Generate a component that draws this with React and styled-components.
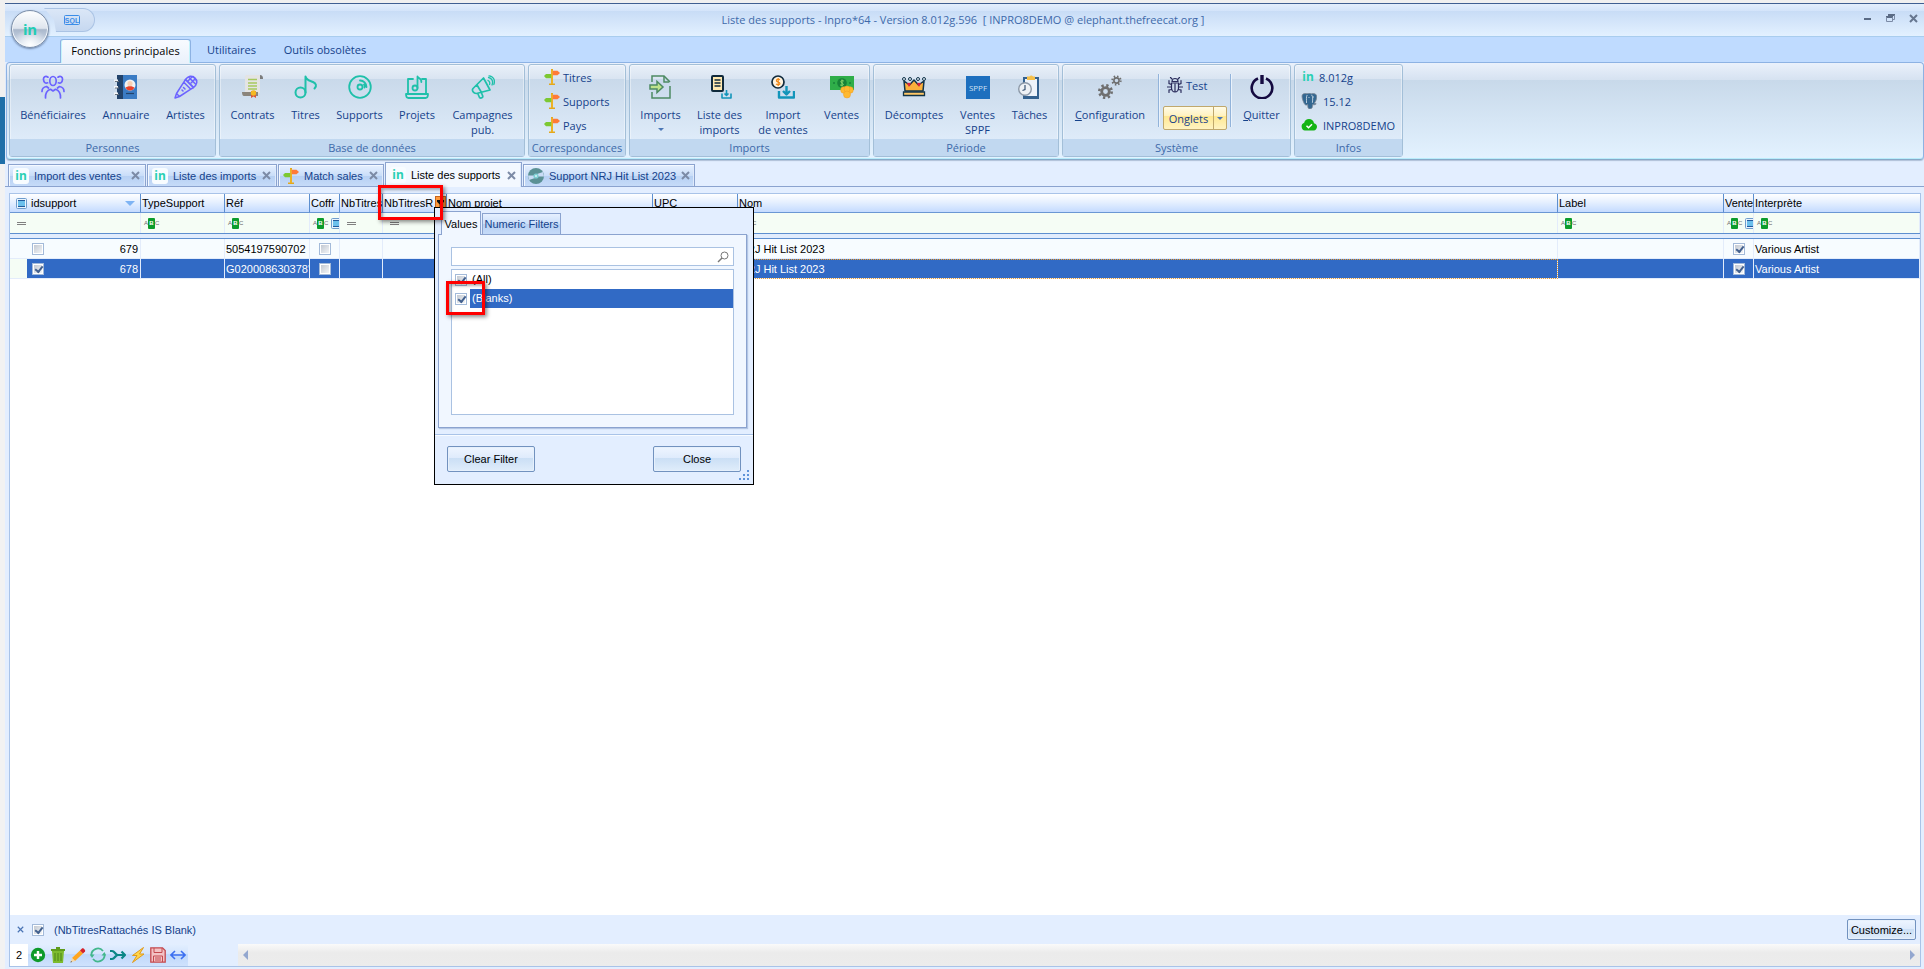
import React from 'react';
import styled, { createGlobalStyle } from 'styled-components';

const GlobalStyle = createGlobalStyle`
  * {
    box-sizing: border-box;
  }
  body {
    margin: 0;
    font-family: "Liberation Sans", Arial, sans-serif;
    font-size: 11px;
    color: #000;
    background: #f0f0f0;
  }
  button, input {
    font: inherit;
    color: inherit;
    margin: 0;
    padding: 0;
  }
  button {
    background: none;
    border: 0;
  }
  svg {
    display: block;
    flex: none;
  }
`;

/* ---------- icons ---------- */

const Svg = ({ s = 24, box = 24, children }) => (
  <svg width={s} height={s} viewBox={`0 0 ${box} ${box}`} fill="none" aria-hidden="true">{children}</svg>
);

const PeopleIcon = () => (
  <Svg>
    <g stroke="#6c63ff" strokeWidth="1.7" strokeLinecap="round" strokeLinejoin="round">
      <ellipse cx="12" cy="6" rx="3.2" ry="4.500" />
      <path d="M7 2.200C4.500 .3 2.200 2 2.500 4.500 2.700 7.500 4.600 8.600 6.600 7.800M17 2.200c2.500-1.900 4.800-.2 4.500 2.300-.2 3-2.100 4.100-4.100 3.300" />
      <path d="M4.500 23c-.3-5.500 1.500-7.500 5-8.700L12 16l2.500-1.700c3.500 1.200 5.300 3.200 5 8.700M1 16.500c0-3.500 1.500-4.500 4.500-5L7.500 13M23 16.500c0-3.500-1.500-4.500-4.500-5L16.500 13" />
    </g>
  </Svg>
);

const BookIcon = () => (
  <Svg>
    <path d="M3 0h20v24H3z" fill="#3b7cc4" />
    <path d="M3 0h6v24H3z" fill="#22436b" />
    <circle cx="16" cy="10" r="5.500" fill="#f2f2f2" />
    <path d="M11.500 12.800a5 5 0 0 0 9 0c-1-2.200-8-2.200-9 0z" fill="#e8402a" />
    <circle cx="16" cy="8.500" r="2.600" fill="#f9d0b4" />
    <path d="M12 18.500h8" stroke="#22436b" strokeWidth="1.200" />
    <path d="M0 5.500h4M0 12h4M0 18.500h4" stroke="#f4f6f8" strokeWidth="2.200" />
    <path d="M1 6.500h4M1 13h4M1 19.500h4" stroke="#6a737d" />
  </Svg>
);

const MicIcon = () => (
  <Svg>
    <g stroke="#6c63ff" strokeWidth="1.500" strokeLinejoin="round" strokeLinecap="round">
      <path d="M11.500 4.500C14 1 18 0 21 3s2 7-1.500 9.500z" />
      <path d="M11.500 4.500 9.800 7.200l7 7 2.700-1.700zM9.800 7.200 2.500 18.500l3 3L16.800 14.200M2.500 18.500 1 23l4.500-1.500" />
      <path d="m15 2.500 6.500 6.500M19 1.500l3.500 4M17 8l4-4M14 6l4-4M9.500 12.500l1.500 1.500M8 15l1 1" />
    </g>
  </Svg>
);

const ContractIcon = () => (
  <Svg>
    <path d="M4 1.500C4 .5 5 0 6 0h13v18H4z" fill="#e4e4e4" />
    <path d="M19 0c2 0 3 1 3 4h-3z" fill="#7c7c7c" />
    <path d="M7 4.500h9M7 8h9M7 11h9M7 14h9" stroke="#a8c95e" strokeWidth="1.300" />
    <path d="M1 17h16v4H3c-1.500 0-2-2-2-4z" fill="#8b857c" />
    <path d="M10 16h5v7l-2.500-1.500L10 23z" fill="#d9573c" />
    <circle cx="12.500" cy="18" r="2.700" fill="#f5b922" />
  </Svg>
);

const NoteIcon = () => (
  <Svg>
    <g stroke="#1fc0aa" strokeWidth="2" strokeLinejoin="round" strokeLinecap="round">
      <circle cx="6.500" cy="17.500" r="5" />
      <path d="M11.500 17.500V1.500c1 4 4.500 4.200 7.500 5.500 3 1.400 4.200 3.600 1.500 6.500" />
    </g>
  </Svg>
);

const DiscIcon = () => (
  <Svg>
    <g stroke="#1fc0aa" strokeWidth="1.800" strokeLinecap="round">
      <circle cx="12" cy="12" r="10.800" />
      <circle cx="12" cy="12" r="2.500" />
      <path d="M12 5.500a6.500 6.500 0 0 1 6.500 6.500M16 9.500a4 4 0 0 1 .5 3" />
    </g>
  </Svg>
);

const ProjectIcon = () => (
  <Svg>
    <g stroke="#1fc0aa" strokeWidth="1.800" strokeLinecap="round" strokeLinejoin="round">
      <path d="M8 4H3v15M17 4h4v15M1 19h22c0 3-.8 4-2.500 4h-17C1.800 23 1 22 1 19z" />
      <circle cx="10" cy="13" r="2.500" />
      <path d="M12.500 13V1.500c.8 2 4.500 2 3.800 5.500" />
    </g>
  </Svg>
);

const MegaphoneIcon = () => (
  <Svg>
    <g stroke="#1fc0aa" strokeWidth="1.700" strokeLinecap="round" strokeLinejoin="round">
      <path d="M2 13.500 12.500 3l6.500 12-13.500 3.500c-3 .2-5-3-3.500-5zM6 10l4.500 7.500" />
      <path d="m7 19 1.500 3.500c1.500 1.300 3.700 0 3.200-1.700L10.500 18" />
      <path d="M17 5.500a3 3 0 0 1 1.500 4M17.500 2.500c3.500.5 5 4 3.500 7.500M18 .8c4.500.2 6.500 4.800 4.800 8.700" strokeWidth="1.300" />
    </g>
  </Svg>
);

const SignIcon = () => (
  <Svg s={16} box={16}>
    <path d="M7 0h2v15H7zM5 14.500h6V16H5z" fill="#e3a81c" />
    <path d="M8 1.800h5.500L16 4l-2.500 2.200H8z" fill="#ff7a38" />
    <path d="M8 5H2L0 7l2 2.200h6z" fill="#7cc832" />
    <path d="M7.300 1h1.400v14H7.300z" fill="#f0b62c" />
  </Svg>
);

const ImportIcon = () => (
  <Svg>
    <g stroke="#4d8a63" strokeWidth="1.500">
      <path d="M3 7V1h12l6 6M21 11v12H3v-6" />
      <path d="M15 1v6h5" />
      <path d="M1 10h7V6.500l6 5.500-6 5.500V14H1z" fill="#bfe38c" />
    </g>
  </Svg>
);

const TrayArrow = ({ big }) => (
  <g stroke="#1295ba" strokeWidth={big ? 2.400 : 1.600} strokeLinejoin="round">
    {big ? <path d="M8 16v6.500h15V16M15.500 11v8M12 16l3.500 3.500L19 16" /> : <path d="M14 18.500v4.500h9v-4.500M18.500 15v5M16.500 18.500l2 2 2-2" />}
  </g>
);

const ListImportIcon = () => (
  <Svg>
    <rect x="4" y="1" width="11" height="15" rx="1" fill="#ffe9b0" stroke="#102a3c" strokeWidth="2" />
    <path d="M6.500 5h6M6.500 8h6M6.500 11h6" stroke="#102a3c" strokeWidth="1.500" />
    <TrayArrow />
  </Svg>
);

const MoneyImportIcon = () => (
  <Svg>
    <circle cx="7" cy="7" r="6" fill="#fff3df" stroke="#102a3c" strokeWidth="1.700" />
    <path d="M9 4.800C6.800 3.500 5 4.500 5.500 6c.4 1.200 3.200.8 3.400 2.300.2 1.600-2.300 2-3.900.8M7.200 3v8" stroke="#f08a1c" strokeWidth="1.200" />
    <TrayArrow big />
  </Svg>
);

const SalesIcon = () => (
  <Svg>
    <path d="M0 1h24v14H0z" fill="#2fae49" />
    <circle cx="12" cy="8" r="4.800" fill="#178238" />
    <path d="M13.800 6C11 4.800 9.800 7 12 8s1.800 3-1.800 2M12 4.500v7" stroke="#8edc6f" />
    <path d="M3 8h2M19 8h2" stroke="#178238" strokeWidth="1.500" />
    <g fill="#ffb930" stroke="#f09a20" strokeWidth=".5">
      <circle cx="14" cy="15" r="3.300" /><circle cx="20" cy="15" r="3.300" />
      <circle cx="17" cy="14" r="3" /><circle cx="17" cy="19.500" r="3.500" />
    </g>
  </Svg>
);

const CrownIcon = () => (
  <Svg>
    <path d="M3 16 2 6l5.500 4L12 5l4.500 5L22 6l-1 10z" fill="#fbb03b" stroke="#12354a" strokeWidth="1.500" strokeLinejoin="round" />
    <path d="M1.500 17h21v3.500h-21z" fill="#ffc766" stroke="#12354a" strokeWidth="1.300" />
    <g fill="#dfe9f5" stroke="#12354a">
      <circle cx="2" cy="4" r="1.500" /><circle cx="8" cy="4" r="1.500" /><circle cx="16" cy="4" r="1.500" /><circle cx="22" cy="4" r="1.500" />
    </g>
    <path d="M5 8.500c1-1 3-1 4 0L7 12zM15 8.500c1-1 3-1 4 0L17 12z" fill="#d8233f" />
  </Svg>
);

const SppfIcon = () => (
  <Svg>
    <path d="M0 1h24v23H0z" fill="#1d6fbe" />
    <text x="12" y="16" textAnchor="middle" fontSize="8" fill="#cfe0f3">SPPF</text>
  </Svg>
);

const TaskIcon = () => (
  <Svg>
    <path d="M5 2h16v22H5z" fill="#34618f" />
    <path d="M7 4h12v17H7z" fill="#eef3fa" />
    <path d="M9 1.500h2.500a2 2 0 0 1 3.500 0h2V5H9z" fill="#f6c04a" />
    <circle cx="7" cy="14" r="6.300" fill="#eef1f5" stroke="#8d99a8" strokeWidth="1.400" />
    <path d="M7 10v4.500l-2.500 1" stroke="#3b5575" strokeWidth="1.200" />
  </Svg>
);

const GearsIcon = () => (
  <Svg>
    <g stroke="#6f6f6f">
      <circle cx="7.500" cy="16.500" r="3.800" strokeWidth="2.800" />
      <circle cx="7.500" cy="16.500" r="6.200" strokeWidth="2.600" strokeDasharray="2.300 2.570" />
      <circle cx="18.500" cy="5.500" r="2.600" strokeWidth="1.600" />
      <circle cx="18.500" cy="5.500" r="4.200" strokeWidth="1.900" strokeDasharray="1.500 1.799" />
    </g>
  </Svg>
);

const BugIcon = () => (
  <Svg s={16} box={16}>
    <g stroke="#2b2d5c" strokeWidth="1.200" strokeLinecap="round">
      <path d="M5 4.500a3 3 0 0 1 6 0zM4.500 6h7v5a3.500 4 0 0 1-7 0zM8 7v7.500" />
      <path d="M5 2 3.500.5M11 2 12.500.5M4.500 7.500 2 6.500V3.500M4.500 10H.5M4.800 12.500 2 13v2.500M11.500 7.500 14 6.500V3.500M11.500 10h4M11.200 12.500 14 13v2.500" />
    </g>
  </Svg>
);

const PowerIcon = () => (
  <Svg>
    <path d="M8 3.500a10.300 10.300 0 1 0 8 0" stroke="#140a40" strokeWidth="2.600" />
    <path d="M12 0v9" stroke="#140a40" strokeWidth="3.400" />
  </Svg>
);

const PostgresIcon = () => (
  <Svg s={16} box={16}>
    <path d="M1 3c0-2 2-3 5-2.200 2-.8 3-.8 4.500 0C14 0 16 1.500 15.800 4c-.2 2.500-1.300 5-2.600 6.300l2 .5c-.8 1-2.300 1.100-3.500.8-.2 2.500-.5 4.400-2.700 4.400-2 0-2.300-1.700-2.300-4.500-1.200 1-2.500.8-3.400-.9C2.200 8.500 1 5.500 1 3z" fill="#336791" stroke="#7b8794" strokeWidth=".8" />
    <path d="M6.200 2c-1.300 2-.5 4.500-.7 8M10.500 1.800c1.500 1.700 1.300 4 .9 8M7.500 4.500h1M12 4h1" stroke="#dbe6f0" strokeWidth=".8" />
  </Svg>
);

const CloudIcon = () => (
  <Svg s={16} box={16}>
    <path d="M4 13.500a4 4 0 0 1-.8-7.700C3.600 3.500 5.500 2 8 2c2.700 0 4.700 1.800 5 4.300 1.800.3 3 1.700 3 3.500s-1.400 3.700-3.200 3.700z" fill="#14b414" />
    <path d="m5.500 8.800 2 2 3.500-3.600" stroke="#fff" strokeWidth="1.500" />
  </Svg>
);

const SqlIcon = () => (
  <svg width="16" height="10" viewBox="0 0 16 10" fill="none" aria-hidden="true">
    <rect x=".5" y=".5" width="15" height="9" rx="1" stroke="#3b8de8" />
    <text x="8" y="7.500" textAnchor="middle" fontSize="7" fontWeight="bold" fill="#3b8de8">SQL</text>
  </svg>
);

const VinylIcon = () => (
  <Svg s={16} box={16}>
    <circle cx="8" cy="8" r="8" fill="#5b9195" />
    <path d="M0 7.500 6 7.500 7 10 1 12z" fill="#c9dcf6" />
    <path d="M16 8.500 10 8.500 9 6 15 4z" fill="#c9dcf6" />
    <circle cx="8" cy="8" r="2.600" fill="#7fcfd4" />
    <circle cx="8" cy="8" r="1" fill="#d9f3f5" />
  </Svg>
);

const CloseIcon = ({ s = 9, color = '#7c8ba6', w = 2 }) => (
  <Svg s={s} box={9}><path d="m1 1 7 7M8 1 1 8" stroke={color} strokeWidth={w} /></Svg>
);

const AddIcon = () => (
  <Svg s={16} box={16}><circle cx="8" cy="8" r="7.200" fill="#0e9a2a" /><path d="M8 4v8M4 8h8" stroke="#fff" strokeWidth="2.400" /></Svg>
);
const TrashIcon = () => (
  <Svg s={16} box={16}>
    <path d="M2 4h12l-1 12H3z" fill="#7dbb2e" /><path d="M1 3h14M6 1h4" stroke="#5f9c1c" strokeWidth="1.800" />
    <path d="M5 6v8M8 6v8M11 6v8" stroke="#4d8416" />
  </Svg>
);
const PencilIcon = () => (
  <Svg s={16} box={16}>
    <path d="M2 11 10 3.500 13 6.500 5 14z" fill="#ffa51f" /><path d="m10 3.500 2-2c1-1 4 1.500 3 3l-2 2z" fill="#d6232b" />
    <path d="m2 11 3 3-4.500 1.500z" fill="#f5d7a4" /><path d="m1 14-.5 1.500L2 15z" fill="#333" />
  </Svg>
);
const RefreshIcon = () => (
  <Svg s={16} box={16}>
    <path d="M1.500 9A6.500 6.500 0 0 1 13 4M14.500 7A6.500 6.500 0 0 1 3 12" stroke="#42b78c" strokeWidth="1.800" />
    <path d="M0 7.500h4.500L2 11zM11.500 8.500H16L14.500 5z" fill="#42b78c" />
  </Svg>
);
const MergeIcon = () => (
  <Svg s={16} box={16}>
    <path d="M0 4h2c3 0 3 4 6 4h7M0 12h2c3 0 3-4 6-4M11.500 4.500 15 8l-3.500 3.500" stroke="#0a8686" strokeWidth="2.200" />
  </Svg>
);
const BoltIcon = () => (
  <Svg s={16} box={16}><path d="M13.500.5 2.500 8.500h4.500L2.500 15.500 14 7H9.500z" fill="#ffd54a" stroke="#e09a1c" /></Svg>
);
const SaveIcon = () => (
  <Svg s={16} box={16}>
    <path d="M.8.800h11.700l2.700 2.700v11.700H.8z" fill="#f3c3c5" stroke="#c4494f" strokeWidth="1.300" />
    <path d="M4 1v4.500h8V1M3.500 15V9h9v6M5 11h6M5 13h6" stroke="#c4494f" />
  </Svg>
);
const WidthIcon = () => (
  <Svg s={16} box={16}><path d="M1 8h14M5 4 1 8l4 4M11 4l4 4-4 4" stroke="#3c6ff0" strokeWidth="1.600" /></Svg>
);

const RowMenuIcon = ({ s = 11 }) => (
  <Svg s={s} box={11}>
    <rect x=".5" y=".5" width="10" height="10" rx="1" fill="#eaf4fd" stroke="#6e9ccc" />
    <path d="M2 3h7v5H2z" fill="#6cc0ec" /><path d="M2 2.500h7M2 8.500h7" stroke="#235a9c" />
  </Svg>
);

const Abc = styled.span`
  display: inline-flex;
  align-items: center;
  flex: none;
  font-size: 6px;
  line-height: 11px;
  color: #6b6b6b;
  b {
    width: 7px;
    background: #0c9c2c;
    color: #fff;
    text-align: center;
    border-radius: 1px;
  }
`;
const AbcIcon = () => <Abc>A<b>B</b>C</Abc>;

const InLogo = styled.span`
  display: grid;
  place-items: center;
  flex: none;
  width: ${({ $w }) => $w || 16}px;
  height: 16px;
  border-radius: 3px;
  background: ${({ $plain }) => ($plain ? 'none' : '#f8fcff')};
  color: #2ad0b4;
  font: bold 12px/14px "Noto Sans", sans-serif;
`;

/* ---------- data ---------- */

const personnes = [
  { icon: <PeopleIcon />, text: 'Bénéficiaires', w: 82 },
  { icon: <BookIcon />, text: 'Annuaire', w: 64 },
  { icon: <MicIcon />, text: 'Artistes', w: 55 },
];
const donnees = [
  { icon: <ContractIcon />, text: 'Contrats', w: 61 },
  { icon: <NoteIcon />, text: 'Titres', w: 45 },
  { icon: <DiscIcon />, text: 'Supports', w: 63 },
  { icon: <ProjectIcon />, text: 'Projets', w: 52 },
  { icon: <MegaphoneIcon />, text: <>Campagnes<br />pub.</>, w: 79 },
];
const imports = [
  { icon: <ImportIcon />, text: 'Imports', w: 57, menu: true },
  { icon: <ListImportIcon />, text: <>Liste des<br />imports</>, w: 61 },
  { icon: <MoneyImportIcon />, text: <>Import<br />de ventes</>, w: 66 },
  { icon: <SalesIcon />, text: 'Ventes', w: 51 },
];
const periode = [
  { icon: <CrownIcon />, text: 'Décomptes', w: 76 },
  { icon: <SppfIcon />, text: <>Ventes<br />SPPF</>, w: 51 },
  { icon: <TaskIcon />, text: 'Tâches', w: 53 },
];

const docTabs = [
  { icon: <InLogo>in</InLogo>, text: 'Import des ventes', w: 138 },
  { icon: <InLogo>in</InLogo>, text: 'Liste des imports', w: 130 },
  { icon: <SignIcon />, text: 'Match sales', w: 106 },
  { icon: <InLogo>in</InLogo>, text: 'Liste des supports', w: 137, active: true },
  { icon: <VinylIcon />, text: 'Support NRJ Hit List 2023', w: 172 },
];

const columns = [
  { title: 'idsupport', w: 131, filter: 'eq', first: true },
  { title: 'TypeSupport', w: 84, filter: 'abc' },
  { title: 'Réf', w: 85, filter: 'abc' },
  { title: 'Coffr', w: 30, filter: 'abc+' },
  { title: 'NbTitres', w: 43, filter: 'eq' },
  { title: 'NbTitresR', w: 64, filter: 'eq', filtered: true },
  { title: 'Nom projet', w: 206, filter: 'abc' },
  { title: 'UPC', w: 85, filter: 'abc' },
  { title: 'Nom', filter: 'abc' },
  { title: 'Label', w: 166, filter: 'abc' },
  { title: 'Vente', w: 30, filter: 'abc+' },
  { title: 'Interprète', w: 166, filter: 'abc' },
];

const rows = [
  { id: 679, ref: '5054197590702', nom: 'NRJ Hit List 2023', artist: 'Various Artist' },
  { id: 678, ref: "G020008630378'", nom: 'NRJ Hit List 2023', artist: 'Various Artist', selected: true },
];

const tools = [
  ['Ajouter', <AddIcon />], ['Supprimer', <TrashIcon />], ['Modifier', <PencilIcon />], ['Rafraîchir', <RefreshIcon />],
  ['Fusionner', <MergeIcon />], ['Actions', <BoltIcon />], ['Enregistrer', <SaveIcon />], ['Ajuster', <WidthIcon />],
];

/* ---------- ribbon ---------- */

const BigButton = ({ icon, text, w, menu }) => (
  <Big $w={w}>
    {icon}
    <span>{text}</span>
    {menu && <Caret />}
  </Big>
);

const ButtonGroup = ({ title, items }) => (
  <Group>
    <GroupBody>{items.map((item, i) => <BigButton key={i} {...item} />)}</GroupBody>
    <GroupTitle>{title}</GroupTitle>
  </Group>
);

const Ribbon = () => (
  <RibbonPanel>
    <ButtonGroup title="Personnes" items={personnes} />
    <ButtonGroup title="Base de données" items={donnees} />
    <Group>
      <SmallList $pad={15}>
        <SmallButton><SignIcon />Titres</SmallButton>
        <SmallButton><SignIcon />Supports</SmallButton>
        <SmallButton><SignIcon />Pays</SmallButton>
      </SmallList>
      <GroupTitle $w={96}>Correspondances</GroupTitle>
    </Group>
    <ButtonGroup title="Imports" items={imports} />
    <ButtonGroup title="Période" items={periode} />
    <Group>
      <GroupBody>
        <BigButton icon={<GearsIcon />} text={<><u>C</u>onfiguration</>} w={90} />
        <Divider />
        <SystemColumn>
          <SmallButton><BugIcon />Test</SmallButton>
          <SplitButton>
            <button>Onglets</button>
            <button aria-label="Choisir"><Caret /></button>
          </SplitButton>
        </SystemColumn>
        <Divider />
        <BigButton icon={<PowerIcon />} text={<><u>Q</u>uitter</>} w={53} />
      </GroupBody>
      <GroupTitle>Système</GroupTitle>
    </Group>
    <Group>
      <SmallList $pad={6}>
        <Info><InLogo $plain $w={14}>in</InLogo>8.012g</Info>
        <Info $gap={6}><PostgresIcon />15.12</Info>
        <Info $gap={6}><CloudIcon />INPRO8DEMO</Info>
      </SmallList>
      <GroupTitle $w={107}>Infos</GroupTitle>
    </Group>
  </RibbonPanel>
);

/* ---------- grid ---------- */

const FilterCell = ({ kind }) => (
  <FilterInner>
    {kind === 'eq' ? <EqualSign /> : <AbcIcon />}
    {kind === 'abc+' && <RowMenuIcon />}
  </FilterInner>
);

const DataGrid = () => (
  <Table>
    <colgroup>
      {columns.map((c) => <Col key={c.title} $w={c.w} />)}
    </colgroup>
    <thead>
      <tr>
        {columns.map((c) => (
          <Th key={c.title} scope="col">
            <HeadInner $first={c.first} $tight={c.filtered}>
              {c.first && <RowMenuIcon />}
              <span>{c.title}</span>
              {c.first && <SortMark />}
              {c.filtered && (
                <FilterMark aria-label="Filtrer">
                  <svg width="7" height="7" viewBox="0 0 8 8"><path d="M0 0h8v2L5 5v3H3V5L0 2z" fill="#111" /></svg>
                </FilterMark>
              )}
            </HeadInner>
          </Th>
        ))}
      </tr>
      <tr>
        {columns.map((c) => <FilterTd key={c.title}><FilterCell kind={c.filter} /></FilterTd>)}
      </tr>
      <tr><Band colSpan={columns.length} /></tr>
    </thead>
    <tbody>
      {rows.map((r) => (
        <Row key={r.id} $selected={r.selected}>
          <Td>
            <IdCell>
              <Check type="checkbox" defaultChecked={r.selected} aria-label={`Ligne ${r.id}`} />
              {r.id}
            </IdCell>
          </Td>
          <Td />
          <Td>{r.ref}</Td>
          <Td $center><Check type="checkbox" aria-label="Coffret" /></Td>
          <Td />
          <Td />
          <Td />
          <Td />
          <Td $focus={r.selected}>{r.nom}</Td>
          <Td />
          <Td $center><Check type="checkbox" defaultChecked aria-label="Ventes" /></Td>
          <Td>{r.artist}</Td>
        </Row>
      ))}
    </tbody>
  </Table>
);

const FilterPopup = () => (
  <Popup role="dialog" aria-label="Filtre">
    <PopupTabs>
      <PopupTab $active>Values</PopupTab>
      <PopupTab>Numeric Filters</PopupTab>
    </PopupTabs>
    <PopupPanel>
      <Search>
        <input type="text" aria-label="Rechercher" />
        <svg width="12" height="12" viewBox="0 0 12 12" fill="none">
          <circle cx="7.500" cy="4.500" r="3.500" stroke="#777" /><path d="M5 7 1 11" stroke="#777" strokeWidth="1.500" />
        </svg>
      </Search>
      <Values>
        <Value><Check type="checkbox" defaultChecked /><span>(All)</span></Value>
        <Value $selected><Check type="checkbox" defaultChecked /><span>(Blanks)</span></Value>
      </Values>
    </PopupPanel>
    <PopupFooter>
      <PushButton>Clear Filter</PushButton>
      <PushButton>Close</PushButton>
    </PopupFooter>
    <Grip>
      <svg width="12" height="12" viewBox="0 0 12 12" fill="#5f93d8">
        <path d="M8 0h2v2H8zM4 4h2v2H4zM8 4h2v2H8zM0 8h2v2H0zM4 8h2v2H4zM8 8h2v2H8z" />
      </svg>
    </Grip>
    <Marker $x={11} $y={73} $w={39} $h={34} />
  </Popup>
);

const App = () => (
  <Page>
    <GlobalStyle />
    <SideStrip />
    <Window>
      <TitleBar>
        <QuickAccess><button aria-label="SQL"><SqlIcon /></button></QuickAccess>
        <Title>Liste des supports - Inpro*64 - Version 8.012g.596&nbsp; [ INPRO8DEMO @ elephant.thefreecat.org ]</Title>
        <WindowButtons>
          <button aria-label="Réduire">
            <svg width="9" height="9" viewBox="0 0 9 9"><path d="M1 4h7v2H1z" fill="#5a6b85" /></svg>
          </button>
          <button aria-label="Restaurer">
            <svg width="9" height="9" viewBox="0 0 9 9" fill="none"><path d="M2 1h7M0 3h7" stroke="#5a6b85" strokeWidth="2" /><path d="M.5 3v4.500h6V3M8.500 1v4.500h-2" stroke="#7c8ba6" /></svg>
          </button>
          <button aria-label="Fermer"><CloseIcon color="#66768f" /></button>
        </WindowButtons>
        <AppButton aria-label="Menu">in</AppButton>
      </TitleBar>

      <RibbonTabs>
        <RibbonTab $w={131} $active>Fonctions principales</RibbonTab>
        <RibbonTab $w={81}>Utilitaires</RibbonTab>
        <RibbonTab $w={106}>Outils obsolètes</RibbonTab>
      </RibbonTabs>
      <Ribbon />

      <DocTabs>
        {docTabs.map((t) => (
          <DocTab key={t.text} $w={t.w} $active={t.active}>
            {t.icon}
            <button>{t.text}</button>
            <button aria-label="Fermer l'onglet"><CloseIcon /></button>
          </DocTab>
        ))}
      </DocTabs>

      <GridPanel>
        <DataGrid />
        <Spacer />
        <FilterBar>
          <button aria-label="Effacer le filtre"><CloseIcon s={7} color="#4a74b4" w={1.5} /></button>
          <label>
            <Check type="checkbox" defaultChecked />
            (NbTitresRattachés IS Blank)
          </label>
          <PushButton $small>Customize...</PushButton>
        </FilterBar>
        <StatusBar>
          <Count>2</Count>
          <Toolbar>
            {tools.map(([name, icon]) => <button key={name} aria-label={name}>{icon}</button>)}
          </Toolbar>
          <ScrollTrack>
            <Arrow $left />
            <Arrow />
          </ScrollTrack>
        </StatusBar>
        <FilterPopup />
        <Marker $x={368} $y={-9} $w={65} $h={35} />
      </GridPanel>
    </Window>
  </Page>
);

/* ---------- styles ---------- */

const Page = styled.div`
  display: flex;
  min-height: 100vh;
  padding-top: 3px;
`;

const SideStrip = styled.div`
  width: 5px;
  background: linear-gradient(#f0f0f0 94px, #1f6fa8 94px, #1f6fa8 161px, #f2f2f2 161px);
`;

const Window = styled.div`
  flex: 1;
  min-width: 0;
  display: flex;
  flex-direction: column;
  background: #e3eeff;
  border-top: 1px solid #3f5f92;
`;

const TitleBar = styled.header`
  position: relative;
  display: flex;
  align-items: center;
  height: 33px;
  padding: 0 6px 0 35px;
  border-bottom: 1px solid #a9cdee;
  background: linear-gradient(#e3eefc, #d3e4fa 7px, #c8dcf6 7px, #e3f1ff);
`;

const QuickAccess = styled.div`
  display: flex;
  align-items: center;
  justify-content: flex-end;
  width: 55px;
  height: 24px;
  padding-right: 14px;
  border: 1px solid #aac3e4;
  border-radius: 0 12px 12px 0;
  border-left: 0;
  background: linear-gradient(#dbe7f7, #c6d8f0);
  clip-path: polygon(4px 0, 100% 0, 100% 100%, 16px 100%, 14px 50%);
`;

const AppButton = styled.button`
  position: absolute;
  left: 6px;
  top: 6px;
  width: 38px;
  height: 38px;
  border-radius: 50%;
  border: 1px solid #7c8ea8;
  background: radial-gradient(circle at 50% 95%, #fff, transparent 45%), linear-gradient(#fdfeff, #dfe5ee 48%, #aab8cc 52%, #dce6f2);
  box-shadow: inset 0 0 0 1px #f4f8fc, 0 1px 2px #6e85a8;
  color: #22cdb4;
  font: bold 15px/18px "Noto Sans", sans-serif;
`;

const Title = styled.h1`
  flex: 1;
  margin: 0;
  padding-right: 32px;
  text-align: center;
  font: normal 11px/16px "Open Sans", sans-serif;
  color: #3e6aaa;
`;

const WindowButtons = styled.div`
  display: flex;
  gap: 14px;
  margin-bottom: 3px;
`;

const RibbonTabs = styled.nav`
  display: flex;
  align-items: flex-end;
  height: 25px;
  padding-left: 55px;
  background: #bfdbff;
`;

const RibbonTab = styled.button`
  width: ${({ $w }) => $w}px;
  height: 23px;
  padding-bottom: 2px;
  font: 11px/20px "Open Sans", sans-serif;
  color: ${({ $active }) => ($active ? '#000' : '#15428b')};
  ${({ $active }) => $active && `
    position: relative;
    height: 24px;
    margin-bottom: -1px;
    border: 1px solid #8db2e3;
    border-bottom: 0;
    border-radius: 3px 3px 0 0;
    background: linear-gradient(#f8fbff, #eaf1fb);
    box-shadow: inset 1px 0 #c4f3fb, inset -1px 0 #c4f3fb;
    z-index: 1;
  `}
`;

const RibbonPanel = styled.section`
  display: flex;
  gap: 3px;
  height: 98px;
  margin: 0 0 0 1px;
  padding: 1px 2px;
  border: 1px solid #8db2e3;
  border-bottom-color: #86a9c8;
  border-radius: 4px;
  background: linear-gradient(#eaf1fb, #d6e2f1 17px, #c8d9ea 17px, #e3f2ff);
  box-shadow: inset 0 -1px #b8ecfb, 0 1px 1px #aebfd8;
  font-family: "Open Sans", sans-serif;
  color: #15428b;
`;

const Group = styled.div`
  display: flex;
  flex-direction: column;
  height: 93px;
  border: 1px solid #a3bfd8;
  border-radius: 3px;
  box-shadow: inset 0 0 0 1px rgba(255, 255, 255, 0.4);
  background: linear-gradient(#e9f0f9, #d9e4f1 14px, #c9d9ea 14px, #deebf9 74px);
`;

const GroupBody = styled.div`
  flex: 1;
  display: flex;
  padding: 0 2px;
`;

const GroupTitle = styled.div`
  width: ${({ $w }) => ($w ? `${$w}px` : 'auto')};
  height: 17px;
  line-height: 17px;
  text-align: center;
  background: #c1d8f0;
  color: #3e6aaa;
`;

const Big = styled.button`
  display: flex;
  flex-direction: column;
  align-items: center;
  width: ${({ $w }) => $w}px;
  padding-top: 10px;
  line-height: 15px;
  white-space: nowrap;
  > span {
    margin-top: 8px;
  }
`;

const Caret = styled.i`
  width: 0;
  height: 0;
  border: 3px solid transparent;
  border-top-color: #4c77b6;
  border-bottom: 0;
  ${Big} & {
    margin-top: 6px;
  }
`;

const SmallList = styled.div`
  flex: 1;
  display: flex;
  flex-direction: column;
  padding-left: ${({ $pad }) => $pad}px;
`;

const SmallButton = styled.button`
  display: flex;
  align-items: center;
  gap: 3px;
  height: 24px;
  line-height: 15px;
`;

const Info = styled.div`
  display: flex;
  align-items: center;
  gap: ${({ $gap }) => $gap || 4}px;
  height: 24px;
`;

const Divider = styled.div`
  width: 1px;
  height: 53px;
  margin: 9px 4px 0 3px;
  background: #92b3da;
  box-shadow: 1px 0 #eaf2fb;
`;

const SystemColumn = styled.div`
  display: flex;
  flex-direction: column;
  gap: 9px;
  width: 64px;
  padding-top: 8px;
  ${SmallButton} {
    padding-left: 4px;
  }
`;

const SplitButton = styled.div`
  display: flex;
  height: 24px;
  border: 1px solid #c0a86c;
  border-radius: 2px;
  background: linear-gradient(#fffbe6, #fff2c0 40%, #ffe890 42%, #fff3c2);
  button:first-child {
    flex: 1;
  }
  button:last-child {
    display: grid;
    place-items: center;
    width: 13px;
    border-left: 1px solid #c0a86c;
  }
`;

const DocTabs = styled.nav`
  display: flex;
  align-items: flex-end;
  gap: 1px;
  height: 27px;
  padding-left: 3px;
  border-bottom: 1px solid #8ba3cf;
`;

const DocTab = styled.div`
  display: flex;
  align-items: center;
  gap: 5px;
  width: ${({ $w }) => $w}px;
  height: ${({ $active }) => ($active ? 25 : 22)}px;
  margin-bottom: ${({ $active }) => ($active ? -1 : 0)}px;
  padding: 0 5px 0 4px;
  border: 1px solid #8ba3cf;
  border-bottom: 0;
  background: ${({ $active }) => ($active ? '#f3f8ff' : 'linear-gradient(#e6f0ff, #cadef9 50%, #b6d0f3 52%, #c6dbf8)')};
  box-shadow: inset 1px 1px #f4f9ff, inset -1px 0 #dfeafb;
  color: ${({ $active }) => ($active ? '#000' : '#15428b')};
  white-space: nowrap;
  button:last-child {
    margin-left: auto;
  }
`;

const GridPanel = styled.main`
  position: relative;
  flex: 1;
  display: flex;
  flex-direction: column;
  margin: 6px 3px 2px 4px;
  border: 1px solid #a9c3e8;
  background: #fff;
`;

const Table = styled.table`
  width: 100%;
  table-layout: fixed;
  border-collapse: separate;
  border-spacing: 0;
`;

const Col = styled.col`
  width: ${({ $w }) => ($w ? `${$w}px` : 'auto')};
`;

const Th = styled.th`
  height: 19px;
  padding: 0;
  border-right: 1px solid #5d8fcf;
  border-bottom: 1px solid #6a97d4;
  background: linear-gradient(#fff, #e6f0ff 45%, #c4dbff);
  font-weight: normal;
  text-align: left;
  &:last-child {
    border-right: 0;
  }
`;

const HeadInner = styled.div`
  display: flex;
  align-items: center;
  gap: ${({ $tight }) => ($tight ? 0 : 4)}px;
  height: 18px;
  padding: 0 0 0 ${({ $first }) => ($first ? 6 : 1)}px;
  overflow: hidden;
  white-space: nowrap;
`;

const SortMark = styled.i`
  margin: 0 5px 0 auto;
  border: 5px solid transparent;
  border-top-color: #7fb4f4;
  border-bottom: 0;
`;

const FilterMark = styled.button`
  display: grid;
  place-items: center;
  flex: none;
  width: 11px;
  height: 14px;
  margin-left: auto;
  background: #ff9a3c;
  border: 1px solid #c8651b;
`;

const FilterTd = styled.td`
  height: 20px;
  padding: 0;
  border-right: 1px solid #e3ecfb;
  background: #f5fdf5;
`;

const FilterInner = styled.div`
  display: flex;
  align-items: center;
  gap: 3px;
  height: 20px;
  padding-left: 3px;
  overflow: hidden;
`;

const EqualSign = styled.i`
  width: 9px;
  height: 3px;
  margin-left: 4px;
  border: solid #808080;
  border-width: 1px 0;
`;

const Band = styled.td`
  height: 6px;
  padding: 0;
  border: solid #5d8fcf;
  border-width: 1px 0;
  background: #e0ecfd;
`;

const Td = styled.td`
  height: 20px;
  padding: 0 1px;
  border-right: 1px solid #e3ecfb;
  border-bottom: 1px solid #e3ecfb;
  overflow: hidden;
  white-space: nowrap;
  text-align: ${({ $center }) => ($center ? 'center' : 'left')};
  ${({ $focus }) => $focus && 'outline: 1px dotted #f0a030; outline-offset: -1px;'}
`;

const Row = styled.tr`
  background: ${({ $selected }) => ($selected ? '#316ac5' : '#f7fcff')};
  color: ${({ $selected }) => ($selected ? '#fff' : '#000')};
  td:first-child {
    background: ${({ $selected }) => ($selected ? 'linear-gradient(90deg, #f5fdf5 17px, #316ac5 17px)' : 'none')};
  }
`;

const IdCell = styled.div`
  display: flex;
  align-items: center;
  justify-content: space-between;
  padding: 0 1px 0 21px;
`;

const Check = styled.input`
  appearance: none;
  display: inline-block;
  position: relative;
  flex: none;
  width: 12px;
  height: 12px;
  border: 1px solid #a3bad9;
  background: linear-gradient(135deg, #c3c9d2, #f2f4f6) content-box, #fff;
  padding: 1px;
  vertical-align: middle;
  &:checked::after {
    content: "";
    position: absolute;
    left: 2px;
    top: 2px;
    width: 6px;
    height: 3px;
    border: solid #43618f;
    border-width: 0 0 2px 2px;
    transform: rotate(-52deg);
  }
`;

const Spacer = styled.div`
  flex: 1;
`;

const FilterBar = styled.div`
  display: flex;
  align-items: center;
  gap: 8px;
  height: 29px;
  padding: 0 4px 0 7px;
  background: #e3eeff;
  color: #15428b;
  label {
    display: flex;
    align-items: center;
    gap: 10px;
  }
`;

const PushButton = styled.button`
  width: ${({ $small }) => ($small ? 69 : 88)}px;
  height: ${({ $small }) => ($small ? 21 : 26)}px;
  margin-left: ${({ $small }) => ($small ? 'auto' : 0)};
  border: 1px solid #7292bf;
  border-radius: 2px;
  background: linear-gradient(#eef5ff, #dfebfc 45%, #cbdff5 48%, #e0edfb);
  box-shadow: inset 0 0 0 1px #e6f0fc;
  color: #000;
`;

const StatusBar = styled.div`
  display: flex;
  height: 22px;
  background: #e3eeff;
`;

const Count = styled.div`
  width: 18px;
  line-height: 22px;
  text-align: center;
  background: #fff;
`;

const Toolbar = styled.div`
  display: flex;
  align-items: center;
  gap: 4px;
  width: 160px;
  margin-right: 50px;
  padding-left: 2px;
  background: linear-gradient(#e3efff, #d3e4fd 45%, #bfd8fb 48%, #cfe2fd);
`;

const ScrollTrack = styled.div`
  flex: 1;
  display: flex;
  align-items: center;
  justify-content: space-between;
  padding: 0 5px;
  background: linear-gradient(#fafafa, #ebebeb 40%, #ececec);
`;

const Arrow = styled.i`
  border: solid transparent;
  border-width: 5px ${({ $left }) => ($left ? '5px 5px 0' : '0 5px 5px')};
  border-${({ $left }) => ($left ? 'right' : 'left')}-color: #93a7cf;
`;

const Popup = styled.div`
  position: absolute;
  left: 424px;
  top: 13px;
  width: 320px;
  height: 278px;
  padding: 3px 6px 0 3px;
  border: 1px solid #000;
  background: #e3eeff;
`;

const PopupTabs = styled.div`
  display: flex;
  align-items: flex-end;
  gap: 1px;
  height: 23px;
  padding-left: 3px;
`;

const PopupTab = styled.button`
  position: relative;
  height: ${({ $active }) => ($active ? 24 : 21)}px;
  width: ${({ $active }) => ($active ? 40 : 79)}px;
  margin-bottom: ${({ $active }) => ($active ? -1 : 0)}px;
  border: 1px solid #8ba3cf;
  border-bottom: 0;
  background: ${({ $active }) => ($active ? '#f1f7ff' : 'linear-gradient(#e6f0ff, #cadef9 50%, #b6d0f3 52%, #c6dbf8)')};
  color: ${({ $active }) => ($active ? '#000' : '#15428b')};
  z-index: ${({ $active }) => ($active ? 1 : 0)};
  white-space: nowrap;
`;

const PopupPanel = styled.div`
  height: 194px;
  padding: 12px;
  border: 1px solid #8ba3cf;
  background: #f1f7ff;
  box-shadow: 1px 1px 1px #b4c6e4;
`;

const Search = styled.div`
  display: flex;
  align-items: center;
  height: 19px;
  padding-right: 4px;
  border: 1px solid #aac2e2;
  background: #fff;
  input {
    flex: 1;
    border: 0;
    outline: 0;
    background: none;
  }
`;

const Values = styled.div`
  height: 146px;
  margin-top: 3px;
  border: 1px solid #aac2e2;
  background: #fff;
`;

const Value = styled.label`
  display: flex;
  align-items: center;
  gap: 3px;
  height: 19px;
  padding-left: 3px;
  span {
    flex: 1;
    padding-left: 2px;
    line-height: 19px;
    background: ${({ $selected }) => ($selected ? '#316ac5' : 'none')};
    color: ${({ $selected }) => ($selected ? '#fff' : '#000')};
  }
`;

const PopupFooter = styled.div`
  display: flex;
  justify-content: space-between;
  margin: 6px -6px 0 -3px;
  padding: 11px 12px 0;
  border-top: 1px solid #a9c3e8;
  box-shadow: inset 0 1px #f8fbff;
`;

const Grip = styled.div`
  position: absolute;
  right: 2px;
  bottom: 2px;
`;

const Marker = styled.div`
  position: absolute;
  left: ${({ $x }) => $x}px;
  top: ${({ $y }) => $y}px;
  width: ${({ $w }) => $w}px;
  height: ${({ $h }) => $h}px;
  border: 3px solid #f00;
  box-shadow: 2px 2px 4px rgba(0, 0, 0, 0.45), inset 2px 2px 3px rgba(0, 0, 0, 0.3);
  pointer-events: none;
  z-index: 2;
`;

export default App;
